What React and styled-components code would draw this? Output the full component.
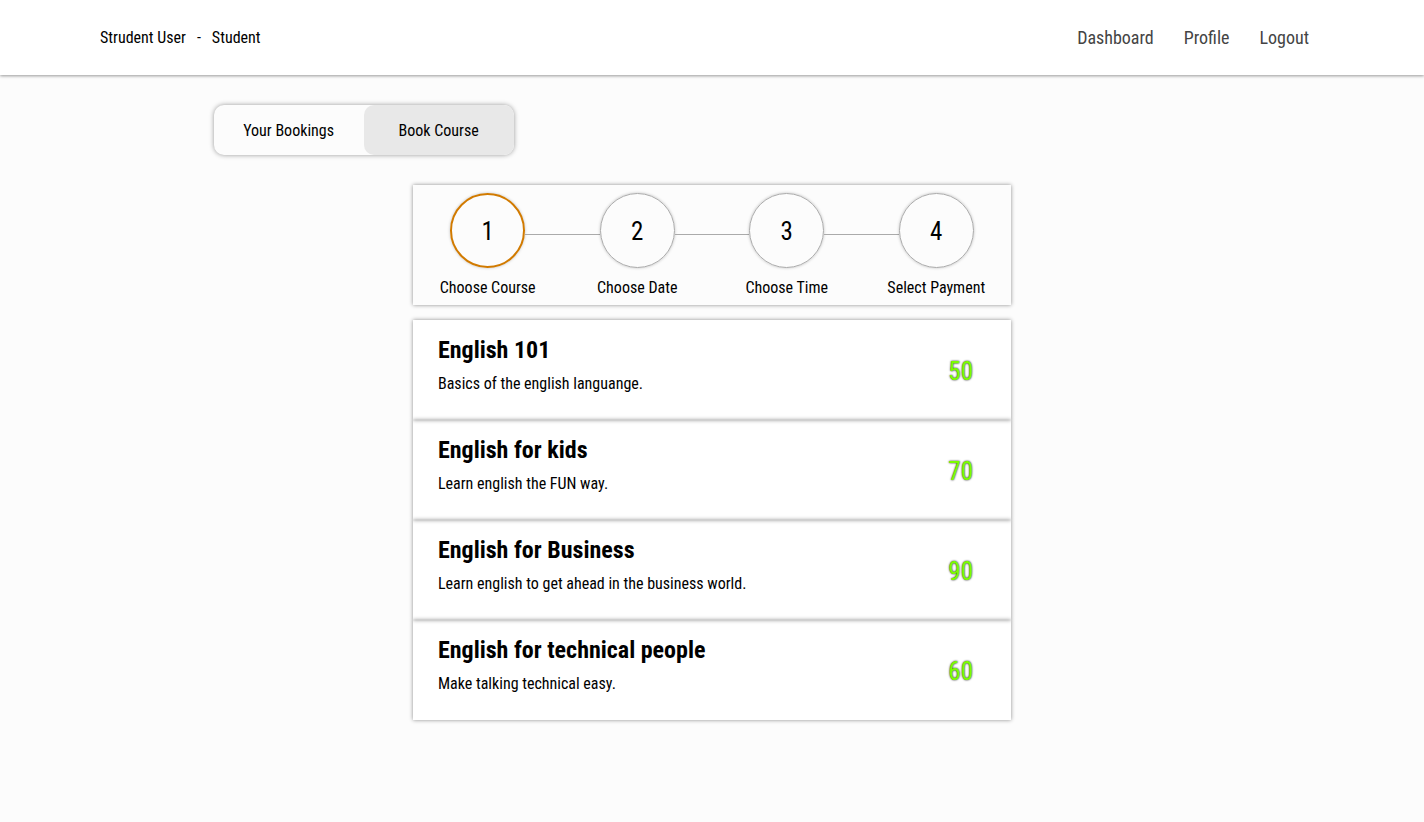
import React from "react";
import styled, { createGlobalStyle } from "styled-components";

const Global = createGlobalStyle`
  *, *::before, *::after { box-sizing: border-box; }
  body {
    margin: 0;
    background: #fcfcfc;
    color: #000;
    font-family: "Roboto Condensed", Roboto, sans-serif;
    font-size: 16px;
    line-height: 20px;
  }
  h2, p, ol, ul { margin: 0; padding: 0; }
  ol, ul { list-style: none; }
`;

const Header = styled.header`
  display: flex;
  align-items: center;
  justify-content: space-between;
  height: 75px;
  padding: 0 100px;
  background: #fff;
  box-shadow: 0 1px 3px rgba(0, 0, 0, 0.4);
`;

const User = styled.div`
  display: flex;
  gap: 11px;
`;

const Nav = styled.nav`
  display: flex;
  gap: 30px;
  padding-right: 15px;
`;

const NavLink = styled.a`
  color: #444;
  font-size: 18px;
  text-decoration: none;
`;

const Main = styled.main`
  width: 70%;
  margin: 30px auto 0;
`;

const Tabs = styled.div`
  display: flex;
  width: 300px;
  overflow: hidden;
  border-radius: 10px;
  box-shadow: 0 0 5px rgba(0, 0, 0, 0.4);
`;

const Tab = styled.button`
  flex: 1;
  height: 50px;
  padding: 2px 0 0;
  border: 0;
  border-radius: 10px;
  background: ${(p) => (p.$active ? "#e8e8e8" : "transparent")};
  color: inherit;
  font: inherit;
`;

const Booking = styled.section`
  width: 60%;
  margin: 30px auto;
`;

const Steps = styled.ol`
  display: flex;
  height: 120px;
  margin-bottom: 15px;
  padding-top: 8px;
  box-shadow: 0 0 4px rgba(0, 0, 0, 0.45);
`;

const Step = styled.li`
  flex: 1;
  text-align: center;
`;

const Track = styled.div`
  display: flex;
  align-items: center;
  margin-bottom: 10px;
`;

const Line = styled.span`
  flex: 1;
  height: 1px;
  margin-top: 8px;
  background: ${(p) => (p.$hidden ? "transparent" : "#aaa")};
`;

const Circle = styled.span`
  display: flex;
  align-items: center;
  justify-content: center;
  width: 75px;
  height: 75px;
  padding-top: 3px;
  border: ${(p) => (p.$active ? "2px solid #d17a00" : "1px solid #aaa")};
  border-radius: 50%;
  box-shadow: 0 0 3px rgba(0, 0, 0, 0.25);
  font-size: 25px;
`;

const Courses = styled.ul`
  background: #fff;
`;

const Course = styled.li`
  display: flex;
  align-items: center;
  justify-content: space-between;
  height: 100px;
  padding: 0 38px 0 25px;
  box-shadow: 0 0 4px rgba(0, 0, 0, 0.45);
`;

const Title = styled.h2`
  margin-bottom: 10px;
  font-size: 24px;
  line-height: 28px;
`;

const Details = styled.div`
  padding-bottom: 10px;
`;

const Price = styled.span`
  padding-top: 4px;
  color: #7cfc00;
  font-size: 25px;
  text-shadow: 0 0 2px #000;
`;

const steps = ["Choose Course", "Choose Date", "Choose Time", "Select Payment"];
const courses = [
  ["English 101", "Basics of the english languange.", 50],
  ["English for kids", "Learn english the FUN way.", 70],
  ["English for Business", "Learn english to get ahead in the business world.", 90],
  ["English for technical people", "Make talking technical easy.", 60],
];

export default function App() {
  return (
    <>
      <Global />
      <Header>
        <User><span>Strudent User</span><span>-</span><span>Student</span></User>
        <Nav>
          {["Dashboard", "Profile", "Logout"].map((label) => (
            <NavLink href="#" key={label}>{label}</NavLink>
          ))}
        </Nav>
      </Header>
      <Main>
        <Tabs>
          <Tab>Your Bookings</Tab>
          <Tab $active>Book Course</Tab>
        </Tabs>
        <Booking>
          <Steps>
            {steps.map((label, i) => (
              <Step key={label}>
                <Track>
                  <Line $hidden={i === 0} />
                  <Circle $active={i === 0}>{i + 1}</Circle>
                  <Line $hidden={i === steps.length - 1} />
                </Track>
                {label}
              </Step>
            ))}
          </Steps>
          <Courses>
            {courses.map(([title, text, price]) => (
              <Course key={title}>
                <Details>
                  <Title>{title}</Title>
                  <p>{text}</p>
                </Details>
                <Price>{price}</Price>
              </Course>
            ))}
          </Courses>
        </Booking>
      </Main>
    </>
  );
}
